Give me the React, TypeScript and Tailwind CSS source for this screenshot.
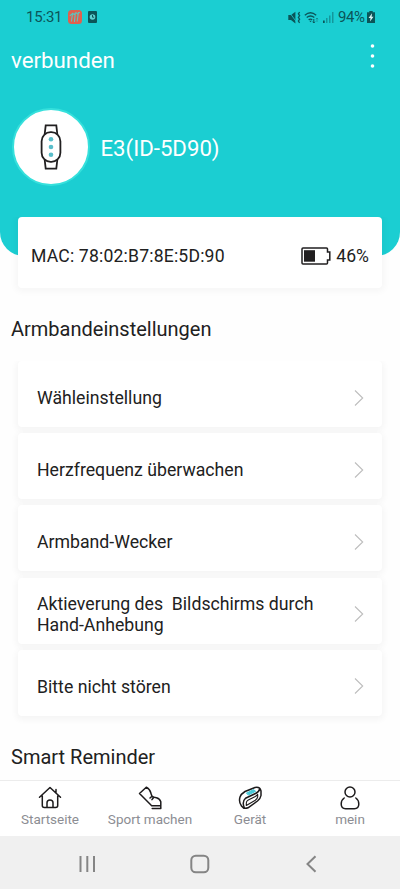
import type { ReactNode } from "react";

const settings = [
  "Wähleinstellung",
  "Herzfrequenz überwachen",
  "Armband-Wecker",
  "Aktieverung des  Bildschirms durch Hand-Anhebung",
  "Bitte nicht stören",
];

function StatusBar() {
  return (
    <div className="flex h-[34px] items-center justify-between pl-[26px] pr-[25px] text-[#0b5558]">
      <div className="flex items-center">
        <span className="w-[42px] text-[15px] leading-none tracking-[-0.2px]">15:31</span>
        <svg width="14" height="14" viewBox="0 0 14 14">
          <rect width="14" height="14" rx="3.5" fill="#e0604e" />
          <path d="M4.6 3 3.4 11.5M7.4 2.5 6.4 12M10.4 2 9.2 11.5M1.8 5.8l3-2.6 1.2 1.3 2-1.8 1.4 1.2 2.4-1.7" fill="none" stroke="#5cc5c0" strokeWidth="1.1" />
        </svg>
        <svg className="ml-[6px]" width="9" height="12" viewBox="0 0 9 12">
          <rect width="9" height="12" rx="1" fill="#0b5558" />
          <circle cx="4.5" cy="6" r="2.8" fill="#5fd0d0" />
          <path d="M4.5 4v2.2h1.6" fill="none" stroke="#0b5558" strokeWidth="1" />
        </svg>
      </div>
      <div className="flex items-center">
        <svg width="13" height="13" viewBox="0 0 13 13" fill="none" stroke="currentColor">
          <path d="M.3 4h2.7L7.4.8v11.6L3 9H.3z" fill="currentColor" stroke="none" />
          <path d="M1 .8 8.5 11" stroke="#1bced2" strokeWidth=".8" />
          <path d="m11.6 1-1.2 1.8 1.2 1.8-1.2 1.8 1.2 1.8-1.2 1.8 1.2 1.8" strokeWidth="1.3" />
        </svg>
        <svg className="ml-[3px]" width="16" height="13" viewBox="0 0 16 13" fill="none" stroke="currentColor">
          <path d="M.8 4.3q5.7-5 11.4 0M2.7 6.6q3.8-3.3 7.6 0M4.6 8.8q1.9-1.5 3.6 0" strokeWidth="1.3" />
          <path d="m5.3 9.8 1.2 1.5 1.3-1.5z" fill="currentColor" stroke="none" />
          <path d="M9.8 8v4m-1.1-1.3L9.8 12l1.1-1.3" strokeWidth="1" />
          <path d="M13 11V7m-1.1 1.2L13 7l1.1 1.2" strokeWidth="1" opacity=".4" />
        </svg>
        <svg className="ml-[3px]" width="11" height="11" viewBox="0 0 11 11" fill="currentColor">
          <rect y="8.5" width="1.7" height="2.5" />
          <rect x="3" y="6" width="1.5" height="5" opacity=".45" />
          <rect x="6" y="3.5" width="1.5" height="7.5" opacity=".45" />
          <rect x="9" y="0" width="1.5" height="11" opacity=".45" />
        </svg>
        <span className="ml-[4px] w-[29px] whitespace-nowrap text-[15px] leading-none tracking-[-0.4px]">94%</span>
        <svg width="8" height="12" viewBox="0 0 8 12">
          <path d="M2.3 0h3.4v1.2H8V12H0V1.2h2.3z" fill="#0b5558" />
          <path d="M5 2.3 1.6 7h1.9L3 10.5 6.5 5.7H4.6z" fill="#d8f5f5" />
        </svg>
      </div>
    </div>
  );
}

function DeviceIcon() {
  return (
    <div className="flex size-[78px] items-center justify-center rounded-full border-2 border-[#36e0dc] bg-white">
      <svg width="22" height="46" viewBox="0 0 22 46" fill="none" stroke="#211f20" strokeWidth="1.8">
        <path d="M4.7 10 5.7 1.3h10.6l1 8.7M4.7 36l1 8.7h10.6l1-8.7" />
        <rect x="1.6" y="8.2" width="18.8" height="29.6" rx="9" />
        <g fill="#59bdca" stroke="none">
          <circle cx="11" cy="15.2" r="2.3" />
          <circle cx="11" cy="23" r="2.3" />
          <circle cx="11" cy="30.8" r="2.3" />
        </g>
      </svg>
    </div>
  );
}

function SettingRow({ label }: { label: string }) {
  return (
    <button className="flex h-[66px] w-full items-center justify-between rounded-[4px] bg-white pl-[19px] pr-[18px] pt-[8px] text-left shadow-[0_2px_6px_2px_rgba(0,0,0,0.04)]">
      <span className="w-[290px] whitespace-pre-wrap pt-px text-[17.7px] leading-[21px]">{label}</span>
      <svg className="-mt-px" width="10" height="18" viewBox="0 0 10 18" fill="none" stroke="#bdbdbd" strokeWidth="1.1">
        <path d="m1 1.5 7.7 7.5L1 16.5" />
      </svg>
    </button>
  );
}

function Tab({ label, children }: { label: string; children: ReactNode }) {
  return (
    <button className="flex flex-1 flex-col items-center pt-[5px] text-[13.5px] leading-4 whitespace-nowrap text-[#8c8d93]">
      <svg width="24" height="24" viewBox="0 0 24 24" fill="none" stroke="#1d1b1c" strokeWidth="1.5" strokeLinecap="round" strokeLinejoin="round">
        {children}
      </svg>
      <span className="mt-px">{label}</span>
    </button>
  );
}

export default function App() {
  return (
    <div className="flex h-[889px] w-[400px] flex-col overflow-hidden bg-[#fefefe] font-[Roboto,sans-serif] text-[#212121]">
      <header className="h-[256px] shrink-0 rounded-b-[24px] bg-[#1bced2] text-white">
        <StatusBar />
        <div className="flex h-[54px] items-center justify-between pl-[11px] pr-[25px]">
          <h1 className="-mt-[2px] text-[22.3px] leading-none">verbunden</h1>
          <svg className="-mt-[10px]" width="5" height="24" viewBox="0 0 5 24" fill="white">
            <circle cx="2.5" cy="2" r="1.8" />
            <circle cx="2.5" cy="12" r="1.8" />
            <circle cx="2.5" cy="22" r="1.8" />
          </svg>
        </div>
        <div className="flex items-center gap-[11px] pl-[11.5px] pt-[20px]">
          <DeviceIcon />
          <span className="pt-[3px] text-[22.2px]">E3(ID-5D90)</span>
        </div>
      </header>

      <main className="-mt-[39px] h-[563px] shrink-0 overflow-hidden px-[18px]">
        <div className="flex h-[71px] items-center justify-between rounded-[4px] bg-white pl-[13px] pr-[13px] pt-[7px] text-[17.6px] shadow-[0_1px_6px_3px_rgba(0,0,0,0.03)]">
          <span className="tracking-[0.18px]">MAC: 78:02:B7:8E:5D:90</span>
          <div className="flex items-center gap-[5px]">
            <svg width="30" height="18" viewBox="0 0 30 18" fill="none" stroke="#211f20" strokeWidth="1.5">
              <rect x="3" y="3.2" width="11" height="11.5" fill="#211f20" stroke="none" />
              <path d="M2 1h23.5q1 0 1 1v3h2.3v8h-2.3v3q0 1-1 1H2q-1 0-1-1V2q0-1 1-1z" />
            </svg>
            <span>46%</span>
          </div>
        </div>
        <h2 className="-ml-[7px] mt-[27px] text-[20px] leading-[28px]">Armbandeinstellungen</h2>
        {/* list clips the shadow above its first row */}
        <div className="-mx-[10px] mt-[18px] flex flex-col gap-[6.2px] overflow-hidden px-[10px] pb-[10px]">
          {settings.map((label) => (
            <SettingRow key={label} label={label} />
          ))}
        </div>
        <h2 className="-ml-[7px] mt-[17px] text-[20px] leading-[28px]">Smart Reminder</h2>
      </main>

      <nav className="flex h-[56px] shrink-0 border-t border-[#ececec] bg-white">
        <Tab label="Startseite">
          <path d="M1.5 11.3 12 1.5l10.5 9.8M18 3.5v3.8M4.3 10v9.5q0 2 2 2h11.4q2 0 2-2V10M9 21v-4.2q0-2.8 3-2.8t3 2.8V21" />
        </Tab>
        <Tab label="Sport machen">
          <path d="M8.3 1.2 1.5 7.5l12.2 12.3h9.1v-4.1q-1.2-3.4-4.4-4-3.2-.4-4.5-1.7L12.8 7q-.5-3.4-4.5-5.8M12 12l2-1.8M14 13.6l1.7-2M14.2 22.6h8.6v-2.4" />
        </Tab>
        <Tab label="Gerät">
          <path d="M2 11q1-3 5-5.5l10-4q5-1 6 3.5v4.5q-.5 3-3.5 5.5l-9.5 6.8q-4 1.7-6.5-1.8Q.5 16 2 11z" />
          <path d="M6.2 21.5q-2.4-6 1.3-9.2l10-4.8q3.7-2 4.2-4.5" />
          <path d="M8.3 19.5V17q0-2 2-3l7-3.6q1.6-.9 2.4-2v2.4q-.4 1.9-2.4 3.4z" strokeWidth="1.1" />
          <path d="m8.7 7 6.8-3.4 2.2 1.7-7 3.6z" fill="#49c9d8" stroke="#49c9d8" strokeWidth="1" />
        </Tab>
        <Tab label="mein">
          <circle cx="12" cy="6" r="5" />
          <path d="M6.2 12Q3.2 14 3.2 18q0 4.7 4.4 4.7h8.8q4.4 0 4.4-4.7 0-4-3-6" />
        </Tab>
      </nav>

      <div className="flex h-[53px] shrink-0 items-center justify-between bg-[#f0f0f0] pl-[78px] pr-[83px] pt-[2px]">
        <svg width="18" height="18" viewBox="0 0 18 18" stroke="#858585" strokeWidth="2">
          <path d="M2.5 1v16M9.3 1v16M16 1v16" />
        </svg>
        <svg className="-ml-[2px]" width="20" height="20" viewBox="0 0 20 20" fill="none" stroke="#858585" strokeWidth="2">
          <rect x="1.3" y="1.7" width="17" height="16.6" rx="4.5" />
        </svg>
        <svg width="12" height="18" viewBox="0 0 12 18" fill="none" stroke="#858585" strokeWidth="2">
          <path d="M10.5 1.3 2.5 9l8 7.7" />
        </svg>
      </div>
    </div>
  );
}
